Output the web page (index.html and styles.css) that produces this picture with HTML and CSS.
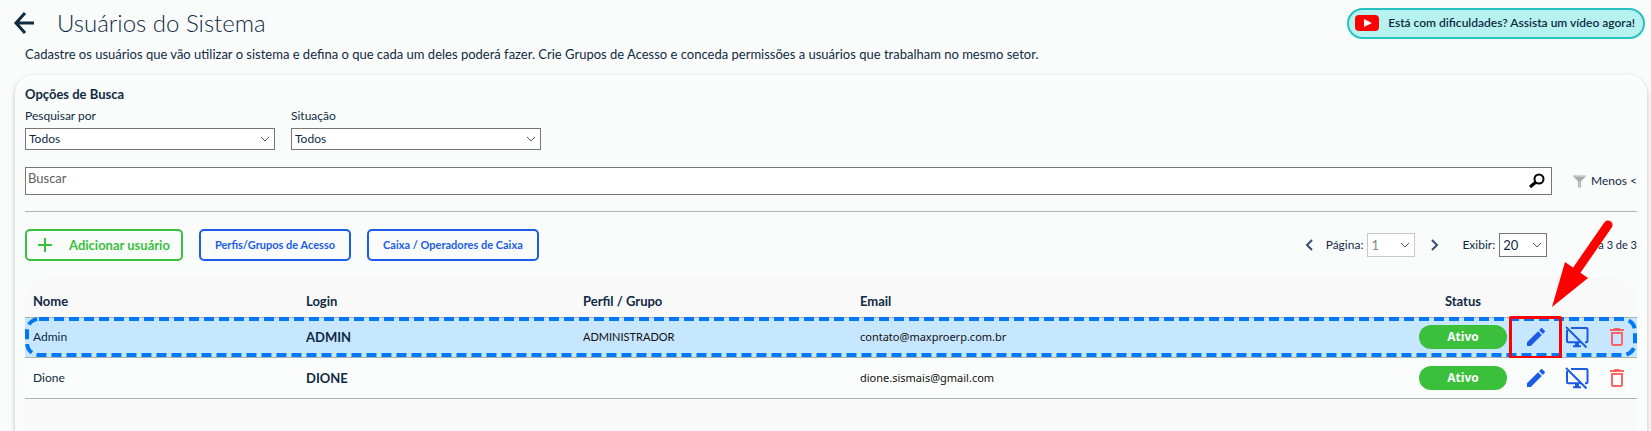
FILE: index.html
```html
<!DOCTYPE html>
<html lang="pt-BR">
<head>
    <meta charset="UTF-8">
    <meta name="viewport" content="width=device-width, initial-scale=1.0">
    <title>Usuários do Sistema</title>
    <link rel="stylesheet" href="styles.css">
</head>
<body>
    <svg class="sprite" aria-hidden="true">
        <symbol id="icon-edit" viewBox="0 0 24 24">
            <path d="M3 17.25V21h3.75L17.8 9.94l-3.75-3.75L3 17.25zM20.7 7.04a1 1 0 0 0 0-1.41L18.37 3.3a1 1 0 0 0-1.41 0l-1.83 1.83 3.75 3.75 1.82-1.84z"/>
        </symbol>
        <symbol id="icon-monitor-off" viewBox="0 0 24 24">
            <path d="M1 2l20.500 20.500M6 3h15.500a1 1 0 0 1 1 1v12.200a1 1 0 0 1-1 1h-1.500M2 5v11.200a1 1 0 0 0 1 1h12.500M8 21.200h8" fill="none" stroke="currentColor" stroke-width="2"/>
            <path d="M10 17h4v4h-4z"/>
        </symbol>
        <symbol id="icon-trash" viewBox="0 0 24 24">
            <path d="M6 19c0 1.100.9 2 2 2h8c1.100 0 2-.9 2-2V7H6v12zM8 9h8v10H8V9zm7.500-5l-1-1h-5l-1 1H5v2h14V4z"/>
        </symbol>
    </svg>

    <header class="topbar">
        <a class="back" href="#" aria-label="Voltar">
            <svg width="22" height="22" viewBox="0 0 22 22"><path d="M21 11H3M12 1L3 11l9 10" fill="none" stroke="currentColor" stroke-width="3"/></svg>
        </a>
        <h1>Usuários do Sistema</h1>
        <a class="help" href="#">
            <svg width="24" height="16" viewBox="0 0 24 16"><rect width="24" height="16" rx="4" fill="#f00"/><path d="M9 4v8l8-4z" fill="#fff"/></svg>
            Está com dificuldades? Assista um vídeo agora!
        </a>
    </header>
    <p class="intro">Cadastre os usuários que vão utilizar o sistema e defina o que cada um deles poderá fazer. Crie Grupos de Acesso e conceda permissões a usuários que trabalham no mesmo setor.</p>

    <main class="panel">
        <form class="search">
            <h2>Opções de Busca</h2>
            <div class="filters">
                <div class="field">
                    <label for="pesquisar">Pesquisar por</label>
                    <select id="pesquisar"><option>Todos</option></select>
                </div>
                <div class="field">
                    <label for="situacao">Situação</label>
                    <select id="situacao"><option>Todos</option></select>
                </div>
            </div>
            <div class="search-row">
                <div class="search-box">
                    <input type="text" placeholder="Buscar" aria-label="Buscar">
                    <button type="submit" aria-label="Pesquisar">
                        <svg width="16" height="16" viewBox="0 0 16 16"><circle cx="10" cy="6" r="4.500" fill="none" stroke="#000" stroke-width="2"/><path d="M7 9l-6 5" stroke="#000" stroke-width="3"/></svg>
                    </button>
                </div>
                <button type="button" class="toggle">
                    <svg width="16" height="15" viewBox="0 0 16 15"><path d="M0 0h16v1l-6 6v8H6V7L0 1z" fill="#aaa"/><path d="M1 1h14" stroke="#ddd"/><path d="M8 7v8" stroke="#ccc" stroke-width="2"/></svg>
                    Menos &lt;
                </button>
            </div>
        </form>

        <div class="toolbar">
            <button type="button" class="btn btn-add">
                <svg width="16" height="16" viewBox="0 0 16 16"><path d="M8 1v14M1 8h14" stroke="currentColor" stroke-width="2"/></svg>
                Adicionar usuário
            </button>
            <button type="button" class="btn">Perfis/Grupos de Acesso</button>
            <button type="button" class="btn">Caixa / Operadores de Caixa</button>
            <div class="pager">
                <button type="button" class="page-nav" aria-label="Página anterior">
                    <svg width="8" height="12" viewBox="0 0 8 12"><path d="M7 1L2 6l5 5" fill="none" stroke="currentColor" stroke-width="2"/></svg>
                </button>
                <label for="pagina">Página:</label>
                <select id="pagina" disabled><option>1</option></select>
                <button type="button" class="page-nav" aria-label="Próxima página">
                    <svg width="8" height="12" viewBox="0 0 8 12"><path d="M1 1l5 5-5 5" fill="none" stroke="currentColor" stroke-width="2"/></svg>
                </button>
                <label for="exibir">Exibir:</label>
                <select id="exibir"><option>20</option></select>
                <span class="range">1 a 3 de 3</span>
            </div>
        </div>

        <div class="grid">
            <table>
                <colgroup>
                    <col class="col-name"><col class="col-data"><col class="col-data"><col>
                    <col class="col-status"><col class="col-edit"><col class="col-action"><col class="col-action">
                </colgroup>
                <thead>
                    <tr>
                        <th>Nome</th>
                        <th>Login</th>
                        <th>Perfil / Grupo</th>
                        <th>Email</th>
                        <th class="center">Status</th>
                        <th colspan="3"></th>
                    </tr>
                </thead>
                <tbody>
                    <tr class="selected">
                        <td>Admin
                            <svg class="dashes" aria-hidden="true"><rect x="2" y="2" rx="12"/></svg>
                        </td>
                        <td class="login">ADMIN</td>
                        <td class="profile">ADMINISTRADOR</td>
                        <td class="email">contato@maxproerp.com.br</td>
                        <td class="center"><span class="badge">Ativo</span></td>
                        <td class="action marked">
                            <button type="button" aria-label="Editar"><svg><use href="#icon-edit"/></svg></button>
                            <svg class="pointer" width="66" height="92" viewBox="0 0 66 92" aria-hidden="true">
                                <path d="M58 9L20 64" stroke="#f00" stroke-width="9" stroke-linecap="round"/>
                                <path d="M2 91L15 46l23 16z" fill="#f00"/>
                            </svg>
                        </td>
                        <td class="action"><button type="button" aria-label="Bloquear acesso"><svg><use href="#icon-monitor-off"/></svg></button></td>
                        <td class="action"><button type="button" class="delete" aria-label="Excluir"><svg><use href="#icon-trash"/></svg></button></td>
                    </tr>
                    <tr>
                        <td>Dione</td>
                        <td class="login">DIONE</td>
                        <td></td>
                        <td class="email">dione.sismais@gmail.com</td>
                        <td class="center"><span class="badge">Ativo</span></td>
                        <td class="action"><button type="button" aria-label="Editar"><svg><use href="#icon-edit"/></svg></button></td>
                        <td class="action"><button type="button" aria-label="Bloquear acesso"><svg><use href="#icon-monitor-off"/></svg></button></td>
                        <td class="action"><button type="button" class="delete" aria-label="Excluir"><svg><use href="#icon-trash"/></svg></button></td>
                    </tr>
                </tbody>
            </table>
        </div>
    </main>
</body>
</html>
```

FILE: styles.css
```css
* {
    box-sizing: border-box;
}
html, body {
    height: 100%;
}
body {
    display: flex;
    flex-direction: column;
    margin: 0;
    overflow: hidden;
    background-color: #fafcfb;
    color: #102a43;
    font-family: Lato, sans-serif;
    font-size: 12px;
    line-height: 16px;
}
h1, h2, p {
    margin: 0;
}
button, input, select {
    font: inherit;
    color: inherit;
}
button {
    background: none;
    border: none;
    padding: 0;
    cursor: pointer;
}
.sprite {
    position: absolute;
    width: 0;
    height: 0;
}
.topbar {
    display: flex;
    align-items: center;
    height: 46px;
    padding: 0 6px 0 13px;
}
.back {
    display: flex;
    color: #102a43;
}
h1 {
    margin-left: 22px;
    font-size: 24px;
    font-weight: 300;
    line-height: 32px;
}
.help {
    display: flex;
    align-items: center;
    gap: 9px;
    height: 31px;
    margin-left: auto;
    padding: 0 8px 0 6px;
    border: 2px solid #26c1c1;
    border-radius: 16px;
    background-color: #b6f2f0;
    color: #102a43;
    font-weight: 600;
    text-decoration: none;
}
.intro {
    padding: 0 25px;
    font-size: 13px;
}
.panel {
    display: flex;
    flex-direction: column;
    flex: 1;
    margin: 13px 4px 0 15px;
    padding: 11px 10px 0;
    border-radius: 20px 20px 0 0;
    box-shadow: 0 2px 5px rgba(0, 0, 0, 0.25), inset 0 3px 2px #fff;
}
h2 {
    font-size: 13px;
    font-weight: 700;
    line-height: 16px;
}
.filters {
    display: flex;
    gap: 16px;
    margin-top: 6px;
}
.field {
    display: flex;
    flex-direction: column;
    gap: 4px;
}
select {
    height: 24px;
    padding: 0 3px;
    border: 1px solid #767676;
    border-radius: 0;
    background: #fff url("data:image/svg+xml,%3Csvg xmlns='http://www.w3.org/2000/svg' width='10' height='6'%3E%3Cpath d='M1 1l4 4 4-4' fill='none' stroke='%23555'/%3E%3C/svg%3E") no-repeat right 4px center;
    appearance: none;
}
.field select {
    width: 250px;
    height: 22px;
}
.search-row {
    display: flex;
    align-items: center;
    gap: 21px;
    margin-top: 17px;
}
.search-box {
    display: flex;
    flex: 1;
    height: 28px;
    padding-right: 6px;
    border: 1px solid #767676;
    background-color: #fff;
}
.search-box input {
    flex: 1;
    height: 20px;
    padding: 0 2px;
    border: none;
    outline: none;
    background: none;
    font-size: 13px;
}
.search-box input::placeholder {
    color: #606060;
}
.search-box button {
    display: flex;
    align-items: center;
}
.toggle {
    display: flex;
    align-items: center;
    gap: 5px;
    width: 64px;
    white-space: nowrap;
}
.toolbar {
    display: flex;
    align-items: center;
    gap: 16px;
    margin-top: 16px;
    padding-top: 17px;
    border-top: 1px solid #aeb2b2;
}
.btn {
    height: 32px;
    padding: 0 14px;
    border: 2px solid #1a5ce5;
    border-radius: 5px;
    color: #1a5ce5;
    font-size: 11px;
    font-weight: 700;
    white-space: nowrap;
}
.btn-add {
    display: flex;
    align-items: center;
    gap: 16px;
    padding: 0 11px 0 10px;
    border-color: #3bc03b;
    color: #3bc03b;
    font-size: 13px;
}
.pager {
    display: flex;
    align-items: center;
    gap: 4px;
    margin-left: auto;
}
.pager select {
    width: 48px;
    font-size: 13px;
}
.pager select:disabled {
    border-color: #c8c8c8;
    color: #888;
    opacity: 1;
}
.page-nav {
    display: flex;
    margin: 0 9px 0 12px;
    color: #34506e;
}
.page-nav + label[for="exibir"] {
    margin-left: 10px;
}
.range {
    margin-left: 38px;
    font-size: 11px;
}
.grid {
    flex: 1;
    margin-top: 16px;
    border-radius: 24px 24px 0 0;
    background-color: #f9f9f9;
}
table {
    width: 100%;
    table-layout: fixed;
    border-collapse: collapse;
}
.col-name {
    width: 273px;
}
.col-data {
    width: 277px;
}
.col-status {
    width: 102px;
}
.col-edit {
    width: 42px;
}
.col-action {
    width: 40px;
}
th, td {
    padding: 0 8px;
    text-align: left;
}
th {
    height: 40px;
    padding-top: 8px;
    font-size: 13px;
}
td {
    height: 41px;
    border-top: 1px solid #aeb2b2;
    border-bottom: 1px solid #aeb2b2;
}
tbody tr {
    position: relative;
    background-color: #fafdfb;
}
tbody .selected {
    background-color: #c7e6ff;
}
.selected td {
    height: 40px;
}
.dashes {
    position: absolute;
    inset: 0;
    width: 100%;
    height: 100%;
    pointer-events: none;
}
.dashes rect {
    width: calc(100% - 4px);
    height: calc(100% - 4px);
    fill: none;
    stroke: #0078f8;
    stroke-width: 4px;
    stroke-dasharray: 10 5;
}
.login {
    font-size: 13px;
    font-weight: 700;
}
.profile, .email {
    color: #111;
    font-size: 11px;
}
.email {
    font-family: "Noto Sans", sans-serif;
}
.center {
    padding: 0 8px 0 6px;
    text-align: center;
}
th.center {
    padding-top: 8px;
}
.badge {
    display: block;
    border-radius: 12px;
    background-color: #3bc03b;
    color: #fff;
    font-family: "Open Sans", sans-serif;
    font-weight: 700;
    line-height: 24px;
}
.action {
    padding: 0;
}
.action button {
    display: flex;
    margin: 0 auto;
    color: #1a5ce5;
}
.action button svg {
    width: 24px;
    height: 24px;
    fill: currentColor;
}
.action .delete {
    color: #ff6464;
}
/* red frame and arrow pointing at the edit button */
.marked {
    position: relative;
}
.marked::after {
    content: "";
    position: absolute;
    inset: -2px -5px -2px -6px;
    border: 3px solid #f00;
    border-radius: 2px;
    pointer-events: none;
}
.pointer {
    position: absolute;
    left: 35px;
    bottom: 49px;
    pointer-events: none;
}
```
